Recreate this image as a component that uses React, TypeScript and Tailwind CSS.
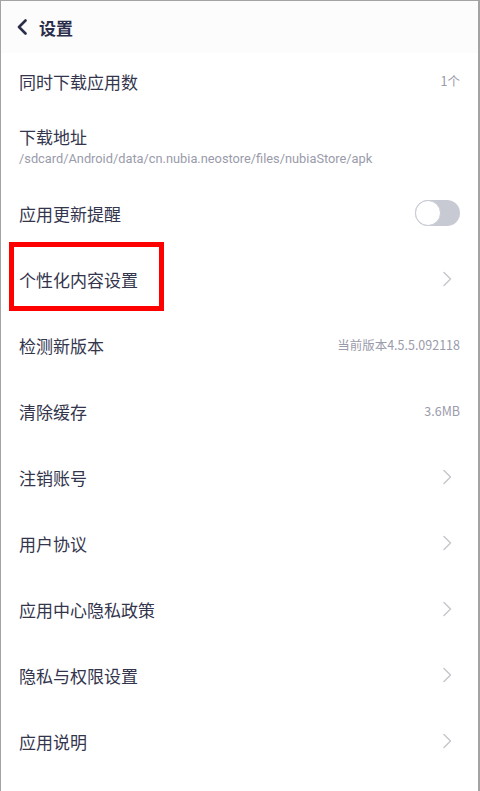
import React from "react";

const font = { fontFamily: '"Noto Sans CJK SC", "Noto Sans", sans-serif' };

function Chevron() {
  return (
    <svg width="10" height="16" viewBox="0 0 10 16" fill="none" className="mr-[8px]">
      <path d="M2 1.5 L8.5 8 L2 14.5" stroke="#c4c5cc" strokeWidth="1.4" strokeLinecap="round" strokeLinejoin="round" />
    </svg>
  );
}

function Row({ label, value, chevron, toggle, highlight, first }: { label: string; value?: string; chevron?: boolean; toggle?: boolean; highlight?: boolean; first?: boolean }) {
  return (
    <div className={`relative flex items-center justify-between pl-[18px] pr-[18px] ${first ? "h-[61px] pb-[5px]" : "h-[66px]"}`}>
      <span className="text-[17px] text-[#33354d] leading-none">{label}</span>
      {value && <span className="text-[12.5px] text-[#9a9bab] leading-none">{value}</span>}
      {chevron && <Chevron />}
      {toggle && (
        <div className="relative w-[45px] h-[26px] rounded-full bg-[#c8cad3]">
          <div className="absolute left-0 top-0 w-[26px] h-[26px] rounded-full bg-white border-[1.5px] border-[#c8cad3]" />
        </div>
      )}
      {highlight && <div className="absolute left-[8px] top-[-4px] w-[155px] h-[69px] border-[5px] border-[#ff0000]" />}
    </div>
  );
}

export default function App() {
  return (
    <div style={font} className="w-[480px] h-[791px] bg-white overflow-hidden border-l border-r-2 border-t border-[#a3a3a3] box-border">
      <div className="h-[52px] bg-[#fcfcfd] flex items-center pl-[16px] gap-[11px]">
        <svg width="11" height="16" viewBox="0 0 11 16" fill="none">
          <path d="M8.5 1.5 L2 8 L8.5 14.5" stroke="#2b2e4a" strokeWidth="2.6" strokeLinecap="round" strokeLinejoin="round" />
        </svg>
        <span className="text-[17px] font-bold text-[#2b2e4a] leading-none">设置</span>
      </div>
      <Row first label="同时下载应用数" value="1个" />
      <div className="h-[66px] flex flex-col justify-center pl-[18px] pr-[18px] gap-[8px]">
        <span className="text-[17px] text-[#33354d] leading-none">下载地址</span>
        <span className="text-[12.8px] text-[#9a9bab] leading-none" style={{ fontFamily: 'Roboto, "Noto Sans CJK SC", sans-serif' }}>/sdcard/Android/data/cn.nubia.neostore/files/nubiaStore/apk</span>
      </div>
      <Row label="应用更新提醒" toggle />
      <Row label="个性化内容设置" chevron highlight />
      <Row label="检测新版本" value="当前版本4.5.5.092118" />
      <Row label="清除缓存" value="3.6MB" />
      <Row label="注销账号" chevron />
      <Row label="用户协议" chevron />
      <Row label="应用中心隐私政策" chevron />
      <Row label="隐私与权限设置" chevron />
      <Row label="应用说明" chevron />
    </div>
  );
}
